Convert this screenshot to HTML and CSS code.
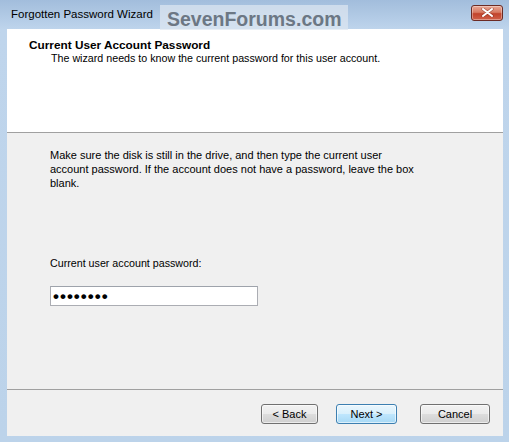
FILE: index.html
```html
<!DOCTYPE html>
<html>
<head>
<meta charset="utf-8">
<link rel="stylesheet" href="styles.css">
</head>
<body>
<div class="window">
  <div class="titlebar">
    <span class="title">Forgotten Password Wizard</span>
    <div class="watermark">SevenForums.com</div>
    <div class="close">
      <svg width="13" height="9" viewBox="0 0 13 9"><path d="M2 1 L11 8 M11 1 L2 8" stroke="#7a2a20" stroke-width="3.4" stroke-linecap="round" fill="none" opacity="0.5"/><path d="M2 1 L11 8 M11 1 L2 8" stroke="#fff" stroke-width="2" stroke-linecap="round" fill="none"/></svg>
    </div>
  </div>
  <div class="client">
    <div class="header">
      <div class="h-title">Current User Account Password</div>
      <div class="h-sub">The wizard needs to know the current password for this user account.</div>
    </div>
    <div class="content">
      <p class="intro">Make sure the disk is still in the drive, and then type the current user<br>account password. If the account does not have a password, leave the box<br>blank.</p>
      <div class="field">
        <label class="label">Current user account password:</label>
        <div class="input"><span class="dots">••••••••</span></div>
      </div>
    </div>
    <div class="footer">
      <button class="btn back">&lt; Back</button>
      <button class="btn next">Next &gt;</button>
      <button class="btn cancel">Cancel</button>
    </div>
  </div>
</div>
</body>
</html>
```

FILE: styles.css
```css
html, body {
  margin: 0;
  padding: 0;
  background: #bcd3ea;
}

.window {
  width: 509px;
  height: 442px;
  box-sizing: border-box;
  padding: 0 6px 6px 7px;
  display: flex;
  flex-direction: column;
  background: linear-gradient(180deg, #a2bddc 0px, #b5cde7 20px, #bfd5ec 30px, #bcd3ea 100%);
  font-family: "Liberation Sans", Arial, sans-serif;
  color: #000;
}

.titlebar {
  height: 29px;
  display: flex;
  align-items: center;
  position: relative;
  flex: none;
}

.title {
  margin-left: 4px;
  margin-top: -2px;
  font-size: 11.5px;
  color: #000;
}

.watermark {
  position: absolute;
  left: 153px;
  top: 5px;
  width: 188px;
  height: 25px;
  background: rgba(222, 231, 241, 0.7);
  color: #6c7784;
  font-weight: bold;
  font-size: 19.5px;
  line-height: 29px;
  padding-left: 7px;
  box-sizing: border-box;
  white-space: nowrap;
}

.close {
  margin-left: auto;
  margin-right: 0;
  margin-top: -4px;
  width: 32px;
  height: 16px;
  border: 1px solid #6b2b24;
  border-radius: 3px;
  box-sizing: border-box;
  background: linear-gradient(180deg, #e9a895 0%, #d87a63 45%, #c2432b 55%, #d0604a 100%);
  display: flex;
  align-items: center;
  justify-content: center;
  box-shadow: inset 0 0 0 1px rgba(255,255,255,0.35);
}

.client {
  flex: 1;
  display: flex;
  flex-direction: column;
  background: #f0f0f0;
  font-size: 11px;
}

.header {
  height: 104px;
  flex: none;
  box-sizing: border-box;
  background: #fff;
  border-bottom: 1px solid #a0a0a0;
  padding: 9px 0 0 22px;
}

.h-title {
  font-weight: bold;
  font-size: 11.8px;
  line-height: 14px;
}

.h-sub {
  padding-left: 22px;
  font-size: 10.7px;
  line-height: 13px;
  margin-top: 0;
}

.content {
  flex: 1;
  padding: 15px 0 0 43px;
}

.intro {
  margin: 0;
  line-height: 14px;
}

.field {
  margin-top: 67px;
  display: flex;
  flex-direction: column;
}

.label {
  line-height: 13px;
  font-size: 10.7px;
}

.input {
  margin-top: 16px;
  width: 208px;
  height: 20px;
  box-sizing: border-box;
  border: 1px solid #abadb3;
  border-top-color: #9ea3ab;
  background: #fff;
  display: flex;
  align-items: center;
  padding-left: 2px;
}

.dots {
  font-size: 17px;
  letter-spacing: 1px;
  line-height: 1;
  font-weight: bold;
}

.footer {
  height: 47px;
  flex: none;
  box-sizing: border-box;
  border-top: 1px solid #a0a0a0;
  display: flex;
  align-items: flex-start;
  justify-content: flex-end;
  padding: 14px 13px 0 0;
}

.btn {
  height: 20px;
  box-sizing: border-box;
  border: 1px solid #707070;
  border-radius: 3px;
  background: linear-gradient(180deg, #f2f2f2 0%, #ebebeb 48%, #dddddd 52%, #cfcfcf 100%);
  font-family: "Liberation Sans", Arial, sans-serif;
  font-size: 11px;
  color: #000;
  padding: 0;
  margin: 0;
  box-shadow: inset 0 0 0 1px rgba(255,255,255,0.6);
}

.back {
  width: 57px;
}

.next {
  width: 61px;
  margin-left: 18px;
  border-color: #3c7fb1;
  background: linear-gradient(180deg, #eaf6fd 0%, #d9f0fc 48%, #bee6fd 52%, #a7d9f5 100%);
}

.cancel {
  width: 70px;
  margin-left: 23px;
}
```
